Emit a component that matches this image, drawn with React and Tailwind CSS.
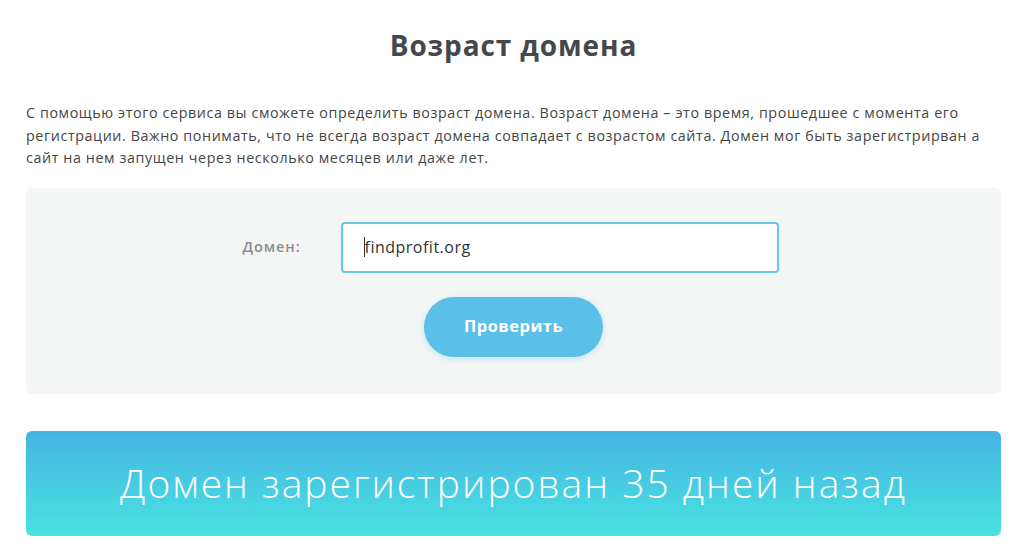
import React from "react";

export default function App() {
  return (
    <div className="w-[1024px] h-[557px] bg-white overflow-hidden" style={{ fontFamily: "'Open Sans', sans-serif" }}>
      <div className="pl-[26px] pr-[23px] pt-[28px]">
        <h1 className="text-center text-[28px] leading-[34px] font-bold text-[#45484b] tracking-[0.9px]">Возраст домена</h1>
        <p className="mt-[40px] text-[14.3px] leading-[22.5px] text-[#454545] tracking-[0.6px]" style={{ fontFamily: "'Open Sans', sans-serif" }}>
          С помощью этого сервиса вы сможете определить возраст домена. Возраст домена – это время, прошедшее с момента его регистрации. Важно понимать, что не всегда возраст домена совпадает с возрастом сайта. Домен мог быть зарегистрирван а сайт на нем запущен через несколько месяцев или даже лет.
        </p>
        <div className="mt-[18px] bg-[#f4f6f6] rounded-[6px] h-[206px] flex flex-col items-center pt-[34px]">
          <div className="flex items-center ml-[-20px]">
            <label className="text-[14.5px] font-semibold text-[#8a8d8f] tracking-[0.9px] w-[112px] text-right pr-[40px]">Домен:</label>
            <div className="w-[438px] h-[51px] bg-white border-2 border-[#66c6e6] rounded-[4px] flex items-center pl-[21px]">
              <span className="w-px h-[20px] bg-[#333]"></span>
              <span className="text-[16px] text-[#333] tracking-[0.5px]">findprofit.org</span>
            </div>
          </div>
          <button className="mt-[24px] w-[179px] h-[60px] rounded-full bg-[#5bc0e8] text-white font-bold text-[16.5px] tracking-[0.5px] shadow-[0_2px_6px_rgba(91,192,232,0.35)]">
            Проверить
          </button>
        </div>
        <div className="mt-[37px] h-[105px] rounded-[6px] bg-gradient-to-b from-[#46b4e3] to-[#49e2e1] flex items-center justify-center">
          <span className="text-white text-[39px] font-light tracking-[2px]">Домен зарегистрирован 35 дней назад</span>
        </div>
      </div>
    </div>
  );
}
